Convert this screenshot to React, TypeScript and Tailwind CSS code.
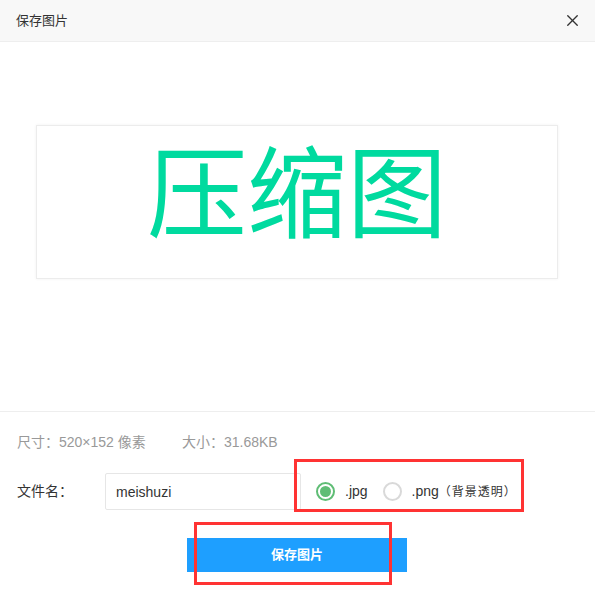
import { X } from "lucide-react";

export default function App() {
  return (
    <div
      className="relative w-[595px] h-[598px] bg-white overflow-hidden text-[#333]"
      style={{ fontFamily: '"Liberation Sans", "Noto Sans CJK SC", sans-serif' }}
    >
      {/* header */}
      <div className="h-[42px] bg-[#f8f8f8] border-b border-[#eee] flex items-center justify-between pl-4 pr-[13px]">
        <span className="text-[13px] text-[#333]">保存图片</span>
        <X size={19} strokeWidth={1.7} className="text-[#333]" />
      </div>

      {/* preview */}
      <div className="h-[370px] border-b border-[#eee] pt-[83px] pl-[36px]">
        <div className="w-[522px] h-[154px] border border-[#ececec] shadow-[0_0_3px_rgba(0,0,0,0.06)] flex justify-center pt-[4px]">
          <span
            className="text-[100px] leading-[114px] text-[#00da9f]"
            style={{ fontFamily: '"Noto Sans CJK SC", sans-serif' }}
          >
            压缩图
          </span>
        </div>
      </div>

      {/* info */}
      <div className="pl-[17px] pt-[20px] flex text-[14px] text-[#999]">
        <span className="w-[165px]">尺寸：520×152 像素</span>
        <span>大小：31.68KB</span>
      </div>

      <div className="pl-[17px] mt-[20px] flex items-center">
        <span className="w-[88px] text-[14px] text-[#333]">文件名：</span>
        <input
          defaultValue="meishuzi"
          className="w-[196px] h-[37px] border border-[#e6e6e6] rounded-[2px] px-[10px] text-[14px] text-[#333] outline-none"
        />
        <div className="ml-[15px] flex items-center">
          <span className="w-[19px] h-[19px] rounded-full border-2 border-[#5fbd75] flex items-center justify-center">
            <span className="w-[11px] h-[11px] rounded-full bg-[#5fbd75]" />
          </span>
          <span className="ml-[10px] text-[14px] text-[#333]">.jpg</span>
          <span className="ml-[15px] w-[19px] h-[19px] rounded-full border-2 border-[#d9d9d9]" />
          <span className="ml-[10px] text-[14px] text-[#333]">.png</span>
          <span className="text-[12px] text-[#333] tracking-[1px]">（背景透明）</span>
        </div>
      </div>

      <div className="mt-[28px] pl-[187px]">
        <button className="w-[220px] h-[34px] bg-[#1e9fff] text-white text-[13px] font-bold">
          保存图片
        </button>
      </div>

      {/* red annotation frames */}
      <div className="absolute left-[294px] top-[459px] w-[230px] h-[53px] border-[3px] border-[#ff3333]" />
      <div className="absolute left-[194px] top-[522px] w-[198px] h-[63px] border-[3px] border-[#ff3333]" />
    </div>
  );
}
